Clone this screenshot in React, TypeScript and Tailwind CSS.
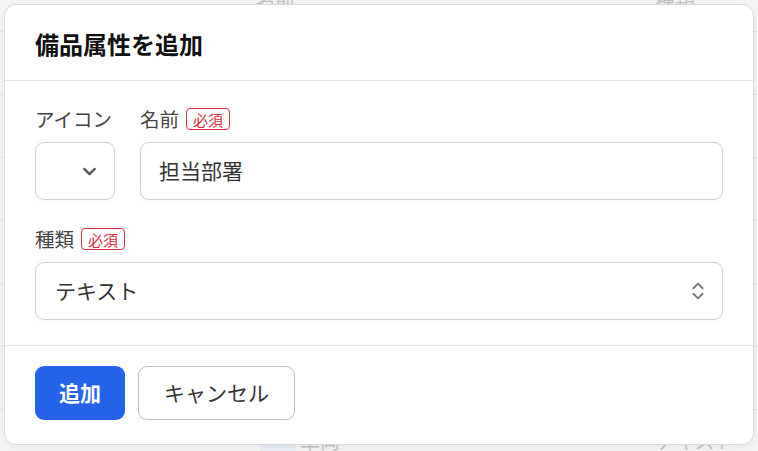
import React from 'react';
import { ChevronDown, ChevronsUpDown } from 'lucide-react';

const FONT = { fontFamily: '"Noto Sans CJK JP", "Noto Sans", sans-serif' };

const BG_ROWS = [
  { name: '名前', kind: '種類', head: true },
  { name: '', kind: '' },
  { name: '', kind: '' },
  { name: '', kind: '' },
  { name: '', kind: '' },
  { name: '', kind: '' },
  { name: '', kind: '' },
  { name: '車両', kind: 'テキスト', icon: true },
];

const Required = () => (
  <span className="ml-[7px] inline-flex h-[22px] items-center rounded-[4px] border border-[#dc2f3c] px-[6px] text-[15px] leading-none text-[#dc2f3c]">
    必須
  </span>
);

const App: React.FC = () => {
  return (
    <div className="relative h-[451px] w-[758px] overflow-hidden bg-[#f4f4f4]" style={FONT}>
      {/* page behind the dialog */}
      <div className="-mt-[31px] flex flex-col">
        {BG_ROWS.map((r, i) => (
          <div key={i} className="flex h-[63px] items-center border-b border-[#e8e8e8] text-[20px] text-[#c4c4c4]">
            <div className="flex w-[300px] items-center justify-end gap-[14px] pr-[4px]">
              {r.icon && <span className="h-[30px] w-[36px] rounded-[4px] bg-[#e8edf6]" />}
            </div>
            <div className={r.icon ? 'w-[355px]' : 'w-[355px] -ml-[45px] pl-0'}>{r.name}</div>
            <div className={r.icon ? 'ml-0' : 'ml-[45px]'}>{r.kind}</div>
          </div>
        ))}
      </div>

      {/* dialog */}
      <div className="absolute inset-0 flex justify-start pl-[4px] pt-[4px]">
        <div className="flex h-[441px] w-[750px] flex-col rounded-[12px] border border-[#d9d9d9] bg-white shadow-[0_2px_10px_rgba(0,0,0,0.06)]">
          <div className="border-b border-[#e4e4e4] px-[30px] pb-[20px] pt-[23px]">
            <h2 className="text-[24px] font-bold leading-[32px] text-[#111]">備品属性を追加</h2>
          </div>

          <div className="border-b border-[#e4e4e4] px-[30px] pb-[25px] pt-[27px]">
            <div className="flex gap-[25px]">
              <div className="flex w-[80px] flex-col">
                <div className="flex h-[22px] items-center text-[19.5px] text-[#444]">アイコン</div>
                <div className="mt-[12px] flex h-[58px] items-center justify-end rounded-[9px] border border-[#d0d0d0] pr-[14px] shadow-[0_1px_6px_rgba(0,0,0,0.04)]">
                  <ChevronDown size={21} strokeWidth={2.6} className="text-[#555]" />
                </div>
              </div>
              <div className="flex flex-1 flex-col">
                <div className="flex h-[22px] items-center text-[19.5px] text-[#444]">
                  名前
                  <Required />
                </div>
                <div className="mt-[12px] flex h-[58px] items-center rounded-[9px] border border-[#d0d0d0] px-[18px] text-[21px] text-[#333] shadow-[0_1px_6px_rgba(0,0,0,0.04)]">
                  担当部署
                </div>
              </div>
            </div>

            <div className="mt-[28px] flex flex-col">
              <div className="flex h-[22px] items-center text-[19.5px] text-[#444]">
                種類
                <Required />
              </div>
              <div className="mt-[12px] flex h-[58px] items-center justify-between rounded-[9px] border border-[#d0d0d0] pl-[19px] pr-[13px] text-[21px] text-[#333] shadow-[0_1px_6px_rgba(0,0,0,0.04)]">
                <span>テキスト</span>
                <ChevronsUpDown size={22} strokeWidth={2} className="text-[#777]" />
              </div>
            </div>
          </div>

          <div className="flex gap-[13px] px-[30px] pt-[20px]">
            <button className="h-[54px] rounded-[9px] bg-[#2563eb] px-[24px] text-[21px] font-bold text-white">
              追加
            </button>
            <button className="h-[54px] rounded-[9px] border border-[#bdbdbd] bg-white px-[25px] text-[21px] text-[#333]">
              キャンセル
            </button>
          </div>
        </div>
      </div>
    </div>
  );
};

export default App;
